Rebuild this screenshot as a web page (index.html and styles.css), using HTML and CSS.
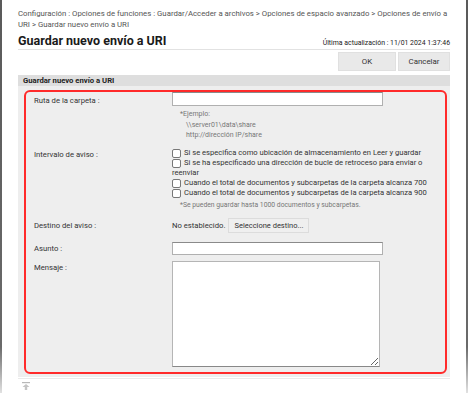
FILE: index.html
```html
<!doctype html>
<html lang="es">
  <head>
    <meta charset="UTF-8" />
    <title>Guardar nuevo envío a URI</title>
    <link rel="stylesheet" href="styles.css">
  </head>
  <body>
    <div class="window">
      <div class="breadcrumb">
        Configuración : Opciones de funciones : Guardar/Acceder a archivos &gt; Opciones de espacio avanzado &gt; Opciones de envío a<br />
        URI &gt; Guardar nuevo envío a URI
      </div>

      <div class="title-row">
        <h1>Guardar nuevo envío a URI</h1>
        <span class="updated">Última actualización : 11/01 2024 1:37:46</span>
      </div>

      <div class="actions">
        <button class="btn btn-ok">OK</button>
        <button class="btn btn-cancel">Cancelar</button>
      </div>

      <div class="section-head">Guardar nuevo envío a URI</div>
      <div class="panel">
        <div class="highlight">
          <div class="row row-path">
            <div class="label">Ruta de la carpeta :</div>
            <div class="value">
              <input type="text" class="text-input" />
              <div class="example">
                <div>*Ejemplo:</div>
                <div class="indent">\\server01\data\share</div>
                <div class="indent">http://dirección IP/share</div>
              </div>
            </div>
          </div>

          <div class="row row-interval">
            <div class="label">Intervalo de aviso :</div>
            <div class="value checks">
              <label class="check"><span class="box"></span>Si se especifica como ubicación de almacenamiento en Leer y guardar</label>
              <label class="check"><span class="box"></span>Si se ha especificado una dirección de bucle de retroceso para enviar o reenviar</label>
              <label class="check"><span class="box"></span>Cuando el total de documentos y subcarpetas de la carpeta alcanza 700</label>
              <label class="check"><span class="box"></span>Cuando el total de documentos y subcarpetas de la carpeta alcanza 900</label>
              <div class="note">*Se pueden guardar hasta 1000 documentos y subcarpetas.</div>
            </div>
          </div>

          <div class="row row-dest">
            <div class="label">Destino del aviso :</div>
            <div class="value dest">
              <span>No establecido.</span>
              <button class="btn btn-select">Seleccione destino...</button>
            </div>
          </div>

          <div class="row row-subject">
            <div class="label">Asunto :</div>
            <div class="value"><input type="text" class="text-input" /></div>
          </div>

          <div class="row row-message">
            <div class="label">Mensaje :</div>
            <div class="value"><textarea class="message"></textarea></div>
          </div>
        </div>
      </div>

      <div class="footer">
        <svg width="8" height="8" viewBox="0 0 8 8">
          <rect x="0" y="0" width="8" height="1.2" fill="#b8b8b8" />
          <path d="M4 2 L7.5 5 H5.2 V8 H2.8 V5 H0.5 Z" fill="#c4c4c4" />
        </svg>
      </div>
    </div>
  </body>
</html>
```

FILE: styles.css
```css
html,
body {
  margin: 0;
  background: white;
}
body {
  font-family: Roboto, "Noto Sans", sans-serif;
  font-size: 7.7px;
  color: #333;
}
.window {
  width: 432px;
  height: 385px;
  padding: 8px 16px 0 16px;
  border-style: solid;
  border-width: 0 2px 0 2px;
  border-image: linear-gradient(#5a5a5a 0%, #6a6a6a 88%, #e4e4e4 100%) 1;
  overflow: hidden;
}
.breadcrumb {
  color: #555;
  font-size: 7.8px;
  line-height: 11px;
  white-space: nowrap;
}
.title-row {
  display: flex;
  justify-content: space-between;
  align-items: flex-end;
  border-bottom: 1px solid #e2e2e2;
  margin-top: 3px;
  height: 16px;
}
h1 {
  margin: 0;
  font-size: 12.5px;
  line-height: 16px;
  font-weight: bold;
  color: #1a1a1a;
}
.updated {
  font-size: 6.9px;
  color: #222;
  line-height: 12px;
}
.actions {
  display: flex;
  justify-content: flex-end;
  gap: 2px;
  margin-top: 2px;
}
.btn {
  font-family: inherit;
  font-size: 7.9px;
  color: #333;
  background: #e9e9e9;
  border: 1px solid #e0e0e0;
  border-radius: 0;
  padding: 0;
  height: 19px;
  cursor: pointer;
}
.btn-ok {
  width: 58px;
}
.btn-cancel {
  width: 52px;
}
.section-head {
  margin-top: 4px;
  background: #dedede;
  font-weight: bold;
  color: #222;
  height: 11px;
  line-height: 11px;
  padding-left: 5px;
}
.panel {
  background: #eeeeee;
  padding: 4px 3px 3px 6px;
}
.highlight {
  border: 2px solid #ff2a2a;
  border-radius: 6px;
  padding: 0 0 5px 0;
}
.row {
  display: grid;
  grid-template-columns: 146px 1fr;
}
.label {
  padding-left: 8px;
  color: #333;
}
.text-input {
  display: block;
  width: 211px;
  height: 14px;
  box-sizing: border-box;
  border: 1px solid #b0b0b0;
  border-top-color: #8a8a8a;
  background: white;
  margin: 0;
  font-size: 8px;
}
.row-path .label {
  padding-top: 4px;
}
.example {
  color: #777;
  font-size: 7px;
  line-height: 10.5px;
  margin-top: 3px;
  padding-left: 8px;
}
.example .indent {
  padding-left: 6px;
}
.row-interval {
  margin-top: 7px;
}
.row-interval .label {
  padding-top: 2px;
}
.checks {
  font-size: 7.6px;
  line-height: 10px;
  padding-right: 15px;
}
.check {
  display: block;
  color: #333;
}
.box {
  display: inline-block;
  box-sizing: border-box;
  width: 9px;
  height: 9px;
  border: 1px solid #777;
  border-radius: 2px;
  background: white;
  margin: 1px 3px 0 0;
  vertical-align: top;
}
.note {
  color: #777;
  font-size: 6.8px;
  margin-top: 2px;
  padding-left: 8px;
}
.row-dest {
  margin-top: 8px;
  align-items: center;
}
.dest {
  display: flex;
  align-items: center;
  gap: 3px;
}
.btn-select {
  width: 81px;
  height: 15px;
  background: #efefef;
  border: 1px solid #dcdcdc;
  font-size: 7.5px;
}
.row-subject {
  margin-top: 9px;
  align-items: center;
}
.row-subject .text-input {
  height: 13px;
}
.row-message {
  margin-top: 6px;
}
.row-message .label {
  padding-top: 2px;
}
.message {
  display: block;
  width: 208px;
  height: 106px;
  box-sizing: border-box;
  border: 1px solid #b5b5b5;
  border-bottom-color: #888;
  background: white;
  margin: 0;
  resize: both;
}
.footer {
  margin-top: 1px;
  border-top: 1px solid #eaeaea;
  padding: 3px 0 0 4px;
}
.footer svg {
  display: block;
}
```
